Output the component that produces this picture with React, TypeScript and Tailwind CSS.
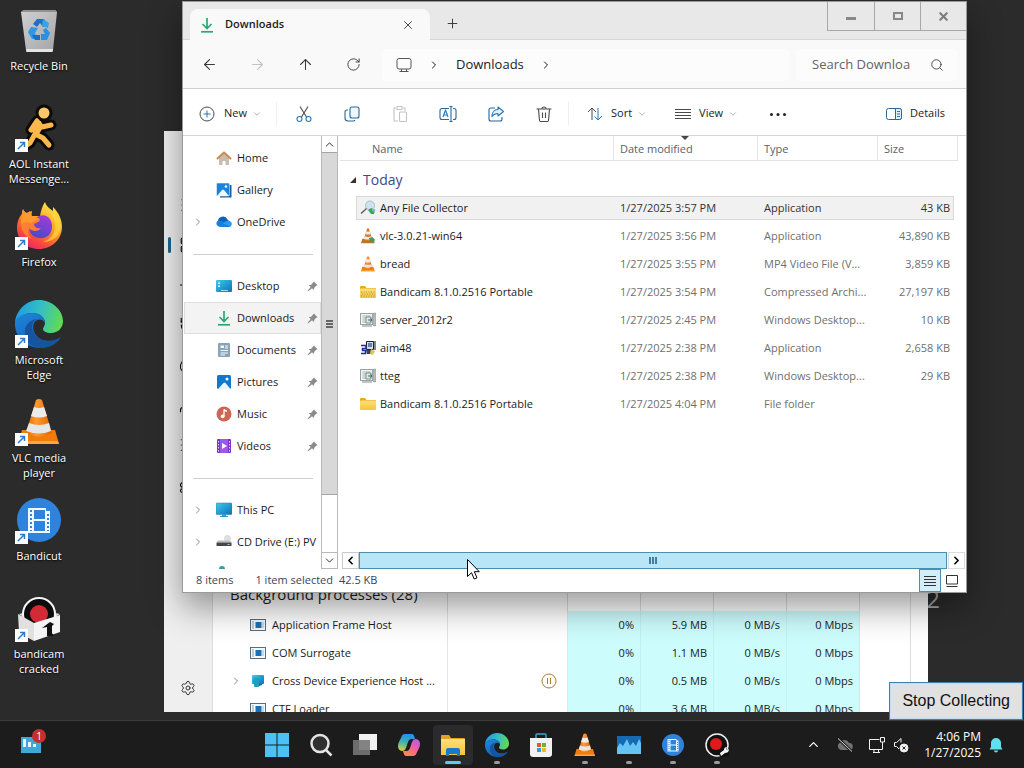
import type { ReactNode } from "react";
import {
	Activity,
	ArrowLeft,
	ArrowRight,
	ArrowUp,
	ChevronDown,
	ChevronLeft,
	ChevronRight,
	ChevronUp,
	Gauge,
	History,
	LayoutGrid,
	List,
	Menu,
	Plus,
	Puzzle,
	RotateCw,
	Search,
	Settings,
	Users,
	X,
} from "lucide-react";
import { clsx } from "clsx";

type IconProps = { className?: string };

type FileRow = {
	name: string;
	date: string;
	type: string;
	size: string;
	icon: ReactNode;
	selected?: boolean;
};

type Process = {
	name: string;
	memory: string;
	icon: ReactNode;
	expandable?: boolean;
	suspended?: boolean;
};

/* gradients shared by the icons */
function Gradients() {
	return (
		<svg aria-hidden="true" className="absolute h-0 w-0">
			<defs>
				<linearGradient id="edgeTop" x1="0" y1="0.4" x2="1" y2="0.6">
					<stop offset="0" stopColor="#1f9de0" />
					<stop offset="0.5" stopColor="#35bfc4" />
					<stop offset="1" stopColor="#63dc4c" />
				</linearGradient>
				<linearGradient id="edgeLeft" x1="0" y1="0" x2="0.6" y2="1">
					<stop offset="0" stopColor="#1e86dd" />
					<stop offset="1" stopColor="#1160b4" />
				</linearGradient>
				<linearGradient id="foxBody" x1="0.8" y1="0" x2="0.2" y2="1">
					<stop offset="0" stopColor="#fff04a" />
					<stop offset="0.45" stopColor="#ff9a25" />
					<stop offset="0.75" stopColor="#fb4a3c" />
					<stop offset="1" stopColor="#e51f74" />
				</linearGradient>
				<linearGradient id="foxGlobe" x1="0.7" y1="0" x2="0.3" y2="1">
					<stop offset="0" stopColor="#a23bd8" />
					<stop offset="1" stopColor="#4b48c8" />
				</linearGradient>
				<linearGradient id="cone" x1="0" y1="0" x2="1" y2="0">
					<stop offset="0" stopColor="#e66a00" />
					<stop offset="0.4" stopColor="#ff9a2e" />
					<stop offset="1" stopColor="#e26200" />
				</linearGradient>
				<linearGradient id="screen" x1="0" y1="0" x2="1" y2="1">
					<stop offset="0" stopColor="#3ccbe8" />
					<stop offset="1" stopColor="#0b6fc0" />
				</linearGradient>
				<linearGradient id="bin" x1="0" y1="0" x2="1" y2="1">
					<stop offset="0" stopColor="#d0d1d2" />
					<stop offset="1" stopColor="#a3a5a7" />
				</linearGradient>
				<linearGradient id="folder" x1="0" y1="0" x2="0" y2="1">
					<stop offset="0" stopColor="#ffe07a" />
					<stop offset="1" stopColor="#f8c33c" />
				</linearGradient>
				<linearGradient id="copilotA" x1="0.6" y1="0" x2="0.3" y2="1">
					<stop offset="0" stopColor="#2a8cf0" />
					<stop offset="0.5" stopColor="#3cb0b4" />
					<stop offset="1" stopColor="#d5cf3b" />
				</linearGradient>
				<linearGradient id="copilotB" x1="0.8" y1="0" x2="0.3" y2="1">
					<stop offset="0" stopColor="#b05ce8" />
					<stop offset="0.5" stopColor="#f0609c" />
					<stop offset="1" stopColor="#ff8a4a" />
				</linearGradient>
			</defs>
		</svg>
	);
}

function RecycleBinIcon({ className }: IconProps) {
	return (
		<svg className={className} viewBox="0 0 48 48" aria-hidden="true">
			<path d="M6 6l3-2h31l2 2-4 38H11z" fill="url(#bin)" />
			<path d="M6 6l3-2h31l2 2z" fill="#8f9193" />
			<path d="M11 43h27l-.4 3H11.300z" fill="#e4e4e4" />
			<path d="M18 18l4-5h7l4 6-5 2-3-4-3 4z" fill="#1f6fc4" />
			<path d="M28 13l6 4-1 5-6-2z" fill="#38a2ee" />
			<path d="M16 21l7 1-3 5 2 6h-5l-4-7z" fill="#2f97e4" />
			<path d="M17 29l3 5h5v-5h-6z" fill="#1d6dc0" />
			<path d="M31 22l4 5-3 7h-6v-6h4l-2-4z" fill="#2b8fe2" />
		</svg>
	);
}

function AimIcon({ className }: IconProps) {
	const body = "M22 17l-6 9M22 17l5 6 9-2M22 18l-2 12 8 4 6 7M20 30l-5 9-6 4";
	return (
		<svg className={className} viewBox="0 0 48 48" aria-hidden="true">
			<g stroke="#0b0b0b" strokeLinecap="round" strokeLinejoin="round" fill="none">
				<path d={body} strokeWidth="11" />
				<circle cx="29" cy="9" r="5" strokeWidth="7" fill="#0b0b0b" />
			</g>
			<path d={body} stroke="#fdb84c" strokeWidth="5" strokeLinecap="round" strokeLinejoin="round" fill="none" />
			<path d="M20 17h6l1 8-4 7-4-3z" fill="#fdb84c" />
			<circle cx="29" cy="9" r="5.500" fill="#fec869" />
		</svg>
	);
}

function FirefoxIcon({ className }: IconProps) {
	return (
		<svg className={className} viewBox="0 0 48 48" aria-hidden="true">
			<path
				d="M30 0c1 4 4 6 8 9 0-2 0-3 0-4 6 6 9 13 9 20 0 12-10 22-23 22S2 38 2 26c0-6 2-11 5-14 0-2 0-4 1-5 1 2 2 3 4 4l5-2c0 2-1 4 0 5h8c1-5 2-10 5-14z"
				fill="url(#foxBody)"
			/>
			<path d="M24 14c8-3 14 4 13 12s-7 11-13 10c-7-1-11-6-9-13 1-5 5-7 9-9z" fill="url(#foxGlobe)" />
			<path d="M8 14c5-1 8 1 10 2l7 1c0 3-4 4-6 5 0 3 3 5 7 4-3 4-9 4-12 0-2 3 0 9 4 11-7-1-12-8-12-15 0-3 0-6 2-8z" fill="#ff7f33" />
			<path d="M7 10l2 3 6-4 1 5 8 2c-2 3-6 3-8 5-3-2-7-1-10 1z" fill="#ff9b2c" />
			<path d="M31 2c0 6 9 10 9 22 0 9-6 14-12 16 10 0 18-7 18-16 0-6-3-12-7-16v5c-3-3-7-6-8-11z" fill="#ffd83d" opacity="0.7" />
		</svg>
	);
}

function EdgeIcon({ className }: IconProps) {
	return (
		<svg className={className} viewBox="0 0 48 48" aria-hidden="true">
			<path
				d="M0 22C2 8 13 0 24 0c13 0 24 10 24 21 0 7-5 12-12 12-5 0-8-2-8-4s2-3 2-6c0-6-6-10-13-10-8 0-14 4-17 9z"
				fill="url(#edgeTop)"
			/>
			<path
				d="M0 22c3-6 9-9 17-9 7 0 13 4 13 10-3-5-9-4-11 0-3 7 2 15 9 17 6 2 12 1 18-3-4 7-12 11-21 11C11 48-1 37 0 22z"
				fill="url(#edgeLeft)"
			/>
			<path d="M23 19c-6 1-8 9-3 16 5 6 15 8 25 3-4 6-11 10-20 10-10-1-16-9-15-17 0-7 6-12 13-12z" fill="#1654a0" />
		</svg>
	);
}

function VlcIcon({ className }: IconProps) {
	return (
		<svg className={className} viewBox="0 0 48 48" aria-hidden="true">
			<path d="M7 32h33l4 14H3z" fill="#f07c0c" />
			<path d="M4 43h39l1 3H3z" fill="#ffa63c" />
			<path d="M21 2q3-2 6 0l10 33q-13 7-26 0z" fill="url(#cone)" />
			<path d="M19 9q5 2 10 0l3 9q-8 3-16 0z" fill="#ececec" />
			<path d="M14 25q10 4 20 0l2 8q-12 5-25 0z" fill="#e6e6e6" />
		</svg>
	);
}

function BandicutIcon({ className }: IconProps) {
	return (
		<svg className={className} viewBox="0 0 48 48" aria-hidden="true">
			<circle cx="24" cy="24" r="22" fill="#2f83dc" />
			<path d="M13 12h18v3h4v22H13z" fill="#f2f8ff" />
			<path d="M19 14h11v9H19zM19 25h11v10H19z" fill="#2f83dc" />
			<g fill="#2f83dc">
				<path d="M15 14h2v2h-2zM15 18h2v2h-2zM15 22h2v2h-2zM15 26h2v2h-2zM15 30h2v2h-2zM15 34h2v1h-2z" />
				<path d="M32 18h2v2h-2zM32 22h2v2h-2zM32 26h2v2h-2zM32 30h2v2h-2zM32 34h2v1h-2z" />
			</g>
		</svg>
	);
}

function BandicamBoxIcon({ className }: IconProps) {
	return (
		<svg className={className} viewBox="0 0 48 48" aria-hidden="true">
			<path d="M4 20l8-2h24l9 2-9 6H13z" fill="#d8d8d8" />
			<circle cx="24" cy="20" r="16" fill="#0c0c0c" stroke="#f5f5f5" strokeWidth="2" />
			<circle cx="24" cy="20" r="9" fill="#d32b35" />
			<path d="M3 20l16 9v18L4 39z" fill="#e0e0e0" />
			<path d="M19 29l26-8v17l-26 9z" fill="#f4f4f4" />
			<path d="M27 34l8-6 4 2-2 2v7l2 3h-7v-9z" fill="#111" />
		</svg>
	);
}

function BandicamIcon({ className }: IconProps) {
	return (
		<svg className={className} viewBox="0 0 24 24" aria-hidden="true">
			<circle cx="12" cy="12" r="11" fill="#111" stroke="#f0f0f0" strokeWidth="1.500" />
			<circle cx="11" cy="11" r="6" fill="#e0191c" />
			<path d="M15 24l-1-3 4-3c-1-2 1-5 4-5l-1 3 1 1 2-1v7z" fill="#111" />
			<path d="M15 20l4-3c0-2 1-3 3-3l-1 2 1 1 2-1c0 3-2 4-4 4l-4 3z" fill="#f5f5f5" />
		</svg>
	);
}

function DownloadIcon({ className }: IconProps) {
	return (
		<svg className={className} viewBox="0 0 16 16" fill="none" stroke="#2aa772" strokeWidth="1.700" aria-hidden="true">
			<path d="M8 1v10M3.500 7L8 11.500 12.500 7" />
			<path d="M2 14.800h12" />
		</svg>
	);
}

function HomeIcon({ className }: IconProps) {
	return (
		<svg className={className} viewBox="0 0 16 16" aria-hidden="true">
			<path d="M3 7l5-4 5 4v8h-3.500v-4h-3v4H3z" fill="#c9bdb2" />
			<path d="M1.500 8.500L8 2.500l6.500 6" stroke="#cf8a4c" strokeWidth="2" fill="none" strokeLinecap="round" strokeLinejoin="round" />
		</svg>
	);
}

function PictureIcon({ className }: IconProps) {
	return (
		<svg className={className} viewBox="0 0 16 16" aria-hidden="true">
			<rect x="1" y="1" width="14" height="14" rx="1.500" fill="#1478c8" />
			<path d="M2 15l5.500-6q1-1 2 0L14.500 15z" fill="#e8f6ff" />
			<circle cx="11" cy="5" r="1.500" fill="#fff" />
		</svg>
	);
}

function GalleryIcon({ className }: IconProps) {
	return (
		<svg className={className} viewBox="0 0 16 16" aria-hidden="true">
			<path d="M4 3h11.500v12.500H4z" fill="#1c5c9c" />
			<rect x="0.500" y="1" width="13" height="13" rx="1" fill="#1c84d8" stroke="#fff" strokeWidth="0.500" />
			<path d="M1 14l5-6q1-1 2 0l5 6z" fill="#eef8ff" />
			<circle cx="10" cy="4.500" r="1.300" fill="#fff" />
		</svg>
	);
}

function OneDriveIcon({ className }: IconProps) {
	return (
		<svg className={className} viewBox="0 0 16 16" aria-hidden="true">
			<path d="M2 8a5 5 0 019.500-2.500L14 8l-6 3z" fill="#0f62ba" />
			<path d="M4 13a3.500 3.500 0 01-2.500-6Q4 6 6.500 7.500L12 10l3 1.500Q14.500 13 13 13z" fill="#1a80d8" />
			<path d="M7 9.500l3-2.500q4-1 5.500 1.500 1 3-1.500 4z" fill="#2b9af0" />
		</svg>
	);
}

function DesktopIcon({ className }: IconProps) {
	return (
		<svg className={className} viewBox="0 0 16 16" aria-hidden="true">
			<rect y="2" width="16" height="12" rx="1" fill="url(#screen)" />
			<path d="M2 4.500h2v1.500H2zM2 7.500h2V9H2z" fill="#d9f6ff" />
			<path d="M5 12h7v1H5z" fill="#9fe3fb" />
		</svg>
	);
}

function DocumentIcon({ className }: IconProps) {
	return (
		<svg className={className} viewBox="0 0 16 16" aria-hidden="true">
			<rect x="2" y="1" width="12" height="14" rx="1" fill="#8ba3b8" />
			<path d="M4.500 3.500H8V6H4.500zM9 3.500h3v1H9zM9 5.500h3v1H9zM4.500 8h7.500v1H4.500zM4.500 10.500h7.500v1H4.500zM4.500 12.500H9v1H4.500z" fill="#f4f9fd" />
		</svg>
	);
}

function MusicIcon({ className }: IconProps) {
	return (
		<svg className={className} viewBox="0 0 16 16" aria-hidden="true">
			<circle cx="8" cy="8" r="7.500" fill="#cc6656" />
			<path d="M8 3.500v6.500" stroke="#fff" strokeWidth="1.300" />
			<path d="M8 3l3 1.500v1.500L8 5z" fill="#fff" />
			<circle cx="6.700" cy="10.300" r="1.900" fill="#fff" />
		</svg>
	);
}

function VideoIcon({ className }: IconProps) {
	return (
		<svg className={className} viewBox="0 0 16 16" aria-hidden="true">
			<rect x="1" y="1" width="14" height="14" rx="1" fill="#7a35c8" />
			<path d="M4 1h8v14H4z" fill="#9a5ae6" />
			<path d="M2 3h1v1.500H2zM2 6h1v1.500H2zM2 9h1v1.500H2zM2 12h1v1.500H2zM13 3h1v1.500h-1zM13 6h1v1.500h-1zM13 9h1v1.500h-1zM13 12h1v1.500h-1z" fill="#e4d4fa" />
			<path d="M6 5l5 3-5 3z" fill="#fff" />
		</svg>
	);
}

function ComputerIcon({ className }: IconProps) {
	return (
		<svg className={className} viewBox="0 0 16 16" aria-hidden="true">
			<rect y="1" width="16" height="11.500" rx="1" fill="url(#screen)" stroke="#2d7d96" strokeWidth="0.500" />
			<path d="M6 12.500h4V14h2v1H4v-1h2z" fill="#2c9cc8" />
		</svg>
	);
}

function DriveIcon({ className }: IconProps) {
	return (
		<svg className={className} viewBox="0 0 16 16" aria-hidden="true">
			<circle cx="11.500" cy="4.500" r="3.500" fill="#dcdedf" />
			<path d="M2 6.500h12l1.500 2H.500z" fill="#bcbec0" />
			<path d="M.500 8.500h15v3.500H.500z" fill="#45474a" />
			<path d="M11.500 10h2v1h-2z" fill="#b9c9bd" />
		</svg>
	);
}

function PinIcon({ className }: IconProps) {
	return (
		<svg className={className} viewBox="0 0 12 12" fill="#8a8a8a" aria-hidden="true">
			<path d="M7.500.500l4 4-1.500.800-2 2-.500 2.500-2-2L1 11.500l-.500-.500 3.500-4.500-2-2 2.500-.500 2-2z" />
		</svg>
	);
}

function CollectorIcon({ className }: IconProps) {
	return (
		<svg className={className} viewBox="0 0 16 16" aria-hidden="true">
			<circle cx="10" cy="5.500" r="4.500" fill="#cfe4ea" stroke="#a3bfca" />
			<path d="M1 13.500l5.500-5" stroke="#555" strokeWidth="1.200" />
			<path d="M8 10l3-2 4 2-1 4h-3z" fill="#3ea55a" />
			<path d="M12 8.500l3.500 1-1 2-2.500-.500z" fill="#7fb3e8" />
		</svg>
	);
}

function FolderIcon({ zipped }: { zipped?: boolean }) {
	return (
		<svg className="h-4 w-4 shrink-0" viewBox="0 0 16 16" aria-hidden="true">
			<path d="M0 3q0-1 1-1h4l1.500 2H15q1 0 1 1v3H0z" fill="#e5a91d" />
			<rect y="4.500" width="16" height="9.500" rx="1" fill="url(#folder)" />
			{zipped && <path d="M1 8h14M2 10h13M1 12h14" stroke="#a38d3c" strokeDasharray="1 1.500" />}
		</svg>
	);
}

function RdpIcon() {
	return (
		<svg className="h-4 w-4 shrink-0" viewBox="0 0 16 16" aria-hidden="true">
			<rect x="0.500" y="1.500" width="12" height="11" fill="#f1f3f3" stroke="#9aa1a3" />
			<path d="M2.500 4h8M2.500 6h5M2.500 8h5M2.500 10h5" stroke="#a7b0b2" />
			<path d="M6 5h5v6H6z" fill="#dfe9e6" stroke="#78908c" />
			<path d="M13.500 1h2v13h-2z" fill="#b5babb" stroke="#7d8385" strokeWidth="0.500" />
			<path d="M2 14h10" stroke="#7f8b8d" />
			<path d="M8 8h4M10.500 6.500L12 8l-1.500 1.500" stroke="#3b6d60" fill="none" />
		</svg>
	);
}

function InstallerIcon() {
	return (
		<svg className="h-4 w-4 shrink-0" viewBox="0 0 16 16" aria-hidden="true">
			<path d="M6.500 1.500h7v8h-7z" fill="#d9dde3" stroke="#1b1b2c" />
			<path d="M8 3h4v4H8z" fill="#5f7fb8" />
			<path d="M1 5.500h5v3H2.500v2h3v3H1" stroke="#1d2b9c" strokeWidth="1.500" fill="none" />
			<path d="M6 10h5l1 4H7z" fill="#3a4150" />
			<path d="M11 9l4 2-2 4-3-1z" fill="#d9c95a" />
			<path d="M15 1v9" stroke="#111" />
		</svg>
	);
}

function VlcSetupIcon() {
	return (
		<svg className="h-4 w-4 shrink-0" viewBox="0 0 48 48" aria-hidden="true">
			<path d="M7 32h33l4 14H3z" fill="#b9752c" />
			<path d="M21 2q3-2 6 0l10 33q-13 7-26 0z" fill="#dd7a1e" />
			<path d="M19 10q5 2 10 0l3 8q-8 3-16 0zM14 25q10 4 20 0l2 7q-12 5-25 0z" fill="#ececec" />
			<path d="M27 30l10-3 8 8-4 9-11-3z" fill="#4c9a58" />
		</svg>
	);
}

function FrameHostIcon() {
	return (
		<svg className="h-4 w-4 shrink-0" viewBox="0 0 16 16" aria-hidden="true">
			<rect x="0.500" y="2.500" width="15" height="11" fill="#f3f8fb" stroke="#5d6c78" />
			<path d="M2 5h2M2 7h2M2 9h2M2 11h2" stroke="#7aa9c8" />
			<rect x="5.500" y="5" width="6" height="6" fill="#1b70b4" />
			<path d="M13 5v6" stroke="#9fb9cb" />
		</svg>
	);
}

function CrossDeviceIcon() {
	return (
		<svg className="h-4 w-4 shrink-0" viewBox="0 0 16 16" aria-hidden="true">
			<rect x="2" y="2" width="12" height="9" rx="1" fill="url(#screen)" />
			<rect x="4" y="5" width="5" height="9" rx="1" fill="#1fa0b8" />
			<path d="M9 11h3v1l-3 1z" fill="#0f6aa8" />
		</svg>
	);
}

const desktopShortcuts = [
	{ name: "Recycle Bin", Icon: RecycleBinIcon, link: false },
	{ name: "AOL Instant Messenge...", Icon: AimIcon, link: true },
	{ name: "Firefox", Icon: FirefoxIcon, link: true },
	{ name: "Microsoft Edge", Icon: EdgeIcon, link: true },
	{ name: "VLC media player", Icon: VlcIcon, link: true },
	{ name: "Bandicut", Icon: BandicutIcon, link: true },
	{ name: "bandicam cracked", Icon: BandicamBoxIcon, link: true },
];

const files: FileRow[] = [
	{ name: "Any File Collector", date: "1/27/2025 3:57 PM", type: "Application", size: "43 KB", icon: <CollectorIcon className="h-4 w-4 shrink-0" />, selected: true },
	{ name: "vlc-3.0.21-win64", date: "1/27/2025 3:56 PM", type: "Application", size: "43,890 KB", icon: <VlcSetupIcon /> },
	{ name: "bread", date: "1/27/2025 3:55 PM", type: "MP4 Video File (V...", size: "3,859 KB", icon: <VlcIcon className="h-4 w-4 shrink-0" /> },
	{ name: "Bandicam 8.1.0.2516 Portable", date: "1/27/2025 3:54 PM", type: "Compressed Archi...", size: "27,197 KB", icon: <FolderIcon zipped /> },
	{ name: "server_2012r2", date: "1/27/2025 2:45 PM", type: "Windows Desktop...", size: "10 KB", icon: <RdpIcon /> },
	{ name: "aim48", date: "1/27/2025 2:38 PM", type: "Application", size: "2,658 KB", icon: <InstallerIcon /> },
	{ name: "tteg", date: "1/27/2025 2:38 PM", type: "Windows Desktop...", size: "29 KB", icon: <RdpIcon /> },
	{ name: "Bandicam 8.1.0.2516 Portable", date: "1/27/2025 4:04 PM", type: "File folder", size: "", icon: <FolderIcon /> },
];

const processes: Process[] = [
	{ name: "Application Frame Host", memory: "5.9 MB", icon: <FrameHostIcon /> },
	{ name: "COM Surrogate", memory: "1.1 MB", icon: <FrameHostIcon /> },
	{ name: "Cross Device Experience Host ...", memory: "0.5 MB", icon: <CrossDeviceIcon />, expandable: true, suspended: true },
	{ name: "CTF Loader", memory: "3.6 MB", icon: <FrameHostIcon /> },
];

function DesktopShortcut({ name, Icon, link }: (typeof desktopShortcuts)[number]) {
	return (
		<button type="button" className="flex h-[98px] w-full flex-col items-center pt-[6px] text-center text-[11px] leading-[15px] text-white">
			<span className="relative h-12 w-12">
				<Icon className="h-full w-full" />
				{link && (
					<span className="absolute bottom-0 left-0 flex h-[13px] w-[13px] items-center justify-center bg-white">
						<svg className="h-[9px] w-[9px]" viewBox="0 0 9 9" fill="none" stroke="#2c7ccb" strokeWidth="1.500" aria-hidden="true">
							<path d="M1 8l6-6M3 1.500h4.500V6" />
						</svg>
					</span>
				)}
			</span>
			<span className="mt-1 px-1 [text-shadow:0_1px_2px_#000]">{name}</span>
		</button>
	);
}

const navIcons = [Menu, LayoutGrid, Activity, History, Gauge, Users, List, Puzzle];

function TaskManager() {
	return (
		<section aria-label="Task Manager" className="absolute top-[131px] right-[96px] bottom-[56px] left-[164px] flex overflow-hidden bg-white">
			<nav className="flex w-12 shrink-0 flex-col bg-[#efefef] pt-[54px] pb-1">
				{navIcons.map((NavIcon, i) => (
					<button key={i} type="button" aria-label={`Page ${i + 1}`} className="relative flex h-10 shrink-0 items-center justify-center">
						{i === 1 && <span className="absolute left-1 h-4 w-[3px] rounded-full bg-[#17678a]" />}
						<NavIcon size={18} strokeWidth={1.5} />
					</button>
				))}
				<button type="button" aria-label="Settings" className="mt-auto flex h-10 shrink-0 items-center justify-center text-[#333]">
					<Settings size={16} strokeWidth={1.5} />
				</button>
			</nav>
			<div className="min-w-0 flex-1 border-l border-[#dedede] pt-[452px]">
				<table className="w-full table-fixed border-separate border-spacing-0 text-[11px] text-[#1a1a1a]">
					<colgroup>
						<col />
						<col className="w-[120px]" />
						<col className="w-[73px]" />
						<col className="w-[73px]" />
						<col className="w-[73px]" />
						<col className="w-[73px]" />
						<col className="w-[51px]" />
						<col className="w-[17px]" />
					</colgroup>
					<tbody>
						<tr className="h-7">
							<th className="border-r border-[#dedede] pb-[6px] pl-[17px] text-left text-[15px] leading-5 font-normal whitespace-nowrap">
								Background processes (28)
							</th>
							<td className="border-r border-[#dedede]" />
							<td className="border-r border-[#dedede]" />
							<td className="border-r border-[#dedede]" />
							<td className="border-r border-[#dedede]" />
							<td className="border-r border-[#dedede]" />
							<td className="border-r border-[#dedede]" />
							<td />
						</tr>
						{processes.map((process) => (
							<tr key={process.name} className="h-7">
								<td className="border-r border-[#e4e4e4]">
									<div className="flex items-center pl-[17px] whitespace-nowrap">
										<span className="flex w-5 shrink-0">
											{process.expandable && <ChevronRight size={12} strokeWidth={2} color="#888" />}
										</span>
										{process.icon}
										<span className="pl-[6px]">{process.name}</span>
									</div>
								</td>
								<td className="border-r border-[#e4e4e4]">
									{process.suspended && (
										<svg className="mr-[10px] ml-auto h-4 w-4" viewBox="0 0 16 16" fill="none" stroke="#a87a35" aria-label="Suspended">
											<circle cx="8" cy="8" r="7" />
											<path d="M6.500 5v6M9.500 5v6" />
										</svg>
									)}
								</td>
								{["0%", process.memory, "0 MB/s", "0 Mbps"].map((value, i) => (
									<td key={i} className="border-r border-[#c0f2f2] bg-[#cdfcfd] pr-[6px] text-right whitespace-nowrap">
										{value}
									</td>
								))}
								<td className="border-r border-[#dedede]" />
								<td />
							</tr>
						))}
					</tbody>
				</table>
			</div>
		</section>
	);
}

function SideItem({
	name,
	icon,
	expandable,
	pinned,
	active,
}: {
	name: string;
	icon: ReactNode;
	expandable?: boolean;
	pinned?: boolean;
	active?: boolean;
}) {
	return (
		<a
			href="#"
			className={clsx(
				"ml-[1px] flex h-8 shrink-0 items-center border pr-[2px] pl-[7px] text-[11px] whitespace-nowrap text-[#1b1b1b]",
				active ? "border-[#dedede] bg-[#f3f3f3]" : "border-transparent",
			)}
		>
			<span className="flex w-6 shrink-0">
				{expandable && <ChevronRight size={12} strokeWidth={2} color="#888" />}
			</span>
			{icon}
			<span className="min-w-0 flex-1 pl-[5px]">{name}</span>
			{pinned && <PinIcon className="h-[11px] w-[11px] shrink-0" />}
		</a>
	);
}

function SideDivider() {
	return (
		<div className="flex h-8 shrink-0 items-center pr-2 pl-[10px]">
			<hr className="w-full border-[#cfcfcf]" />
		</div>
	);
}

function Sidebar() {
	const icon = "h-4 w-4 shrink-0";
	return (
		<nav className="flex w-[138px] shrink-0 flex-col overflow-hidden pt-[6px]">
			<SideItem name="Home" icon={<HomeIcon className={icon} />} />
			<SideItem name="Gallery" icon={<GalleryIcon className={icon} />} />
			<SideItem name="OneDrive" icon={<OneDriveIcon className={icon} />} expandable />
			<SideDivider />
			<SideItem name="Desktop" icon={<DesktopIcon className={icon} />} pinned />
			<SideItem name="Downloads" icon={<DownloadIcon className={icon} />} pinned active />
			<SideItem name="Documents" icon={<DocumentIcon className={icon} />} pinned />
			<SideItem name="Pictures" icon={<PictureIcon className={icon} />} pinned />
			<SideItem name="Music" icon={<MusicIcon className={icon} />} pinned />
			<SideItem name="Videos" icon={<VideoIcon className={icon} />} pinned />
			<SideDivider />
			<SideItem name="This PC" icon={<ComputerIcon className={icon} />} expandable />
			<SideItem name="CD Drive (E:) PV" icon={<DriveIcon className={icon} />} expandable />
			<span className="mt-2 ml-9 h-[3px] w-[6px] shrink-0 rounded-t bg-[#3f98a8]" />
		</nav>
	);
}

function VerticalScrollbar() {
	return (
		<div className="flex w-[17px] shrink-0 flex-col border-x border-[#b9b9b9]">
			<button type="button" aria-label="Scroll up" className="flex h-[17px] items-center justify-center border-b border-[#a5a5a5]">
				<ChevronUp size={13} strokeWidth={1.5} />
			</button>
			<div className="flex h-[342px] flex-col items-center justify-center gap-[1px] border-b border-[#a5a5a5] bg-[#d8d8d8]">
				<span className="h-[2px] w-[7px] bg-[#666]" />
				<span className="h-[2px] w-[7px] bg-[#666]" />
				<span className="h-[2px] w-[7px] bg-[#666]" />
			</div>
			<div className="flex-1" />
			<button type="button" aria-label="Scroll down" className="flex h-[17px] items-center justify-center border-y border-[#b9b9b9]">
				<ChevronDown size={13} strokeWidth={1.5} />
			</button>
		</div>
	);
}

function HorizontalScrollbar() {
	return (
		<div className="mr-[1px] ml-1 flex h-[17px] shrink-0">
			<button type="button" aria-label="Scroll left" className="flex w-[17px] items-center justify-center border border-[#c9c9c9] text-black">
				<ChevronLeft size={13} strokeWidth={3} />
			</button>
			<div className="mr-[1px] flex flex-1 items-center justify-center gap-[1px] border border-[#4a8fb0] bg-[#b8e6f7]">
				<span className="h-[7px] w-[2px] bg-[#3f7fa6]" />
				<span className="h-[7px] w-[2px] bg-[#3f7fa6]" />
				<span className="h-[7px] w-[2px] bg-[#3f7fa6]" />
			</div>
			<button type="button" aria-label="Scroll right" className="flex w-[17px] items-center justify-center border border-[#dcdcdc] text-black">
				<ChevronRight size={13} strokeWidth={3} />
			</button>
		</div>
	);
}

function FileTable() {
	return (
		<table className="w-full table-fixed border-separate border-spacing-0 text-[11px]">
			<colgroup>
				<col />
				<col className="w-[144px]" />
				<col className="w-[120px]" />
				<col className="w-[80px]" />
			</colgroup>
			<thead>
				<tr className="h-[25px] text-left text-[#57616f]">
					<th className="border-r border-b border-[#e3e3e3] pt-[2px] pl-8 font-normal">Name</th>
					<th className="relative border-r border-b border-[#e3e3e3] pt-[2px] pl-[6px] font-normal">
						<span className="absolute top-0 left-[67px] h-0 w-0 border-x-4 border-t-4 border-x-transparent border-t-[#444]" />
						Date modified
					</th>
					<th className="border-r border-b border-[#e3e3e3] pt-[2px] pl-[6px] font-normal">Type</th>
					<th className="border-r border-b border-[#e3e3e3] pt-[2px] pl-[6px] font-normal">Size</th>
				</tr>
			</thead>
			<tbody>
				<tr className="h-[33px]">
					<td colSpan={4} className="pt-1 pl-[9px]">
						<div className="flex items-center gap-[6px] text-[14px] leading-5 text-[#3a4a8c]">
							<svg className="h-2 w-2" viewBox="0 0 8 8" fill="#333" aria-hidden="true">
								<path d="M7 1v6H1z" />
							</svg>
							Today
						</div>
					</td>
				</tr>
				{files.map((file, i) => {
					const bar = clsx(
						"flex h-6 items-center border-y whitespace-nowrap",
						file.selected ? "border-[#d9d9d9] bg-[#f1f1f1] text-[#333]" : "border-transparent text-[#6f6f6f]",
					);
					return (
						<tr key={i} className="h-7">
							<td className="pl-[16px]">
								<div className={clsx(bar, "gap-1 border-l pl-[3px]")}>
									{file.icon}
									<span className="text-[#1b1b1b]">{file.name}</span>
								</div>
							</td>
							<td>
								<div className={clsx(bar, "pl-[6px]")}>{file.date}</div>
							</td>
							<td>
								<div className={clsx(bar, "pl-[6px]")}>{file.type}</div>
							</td>
							<td className="pr-1">
								<div className={clsx(bar, "justify-end border-r pr-[3px]")}>{file.size}</div>
							</td>
						</tr>
					);
				})}
			</tbody>
		</table>
	);
}

function ToolButton({ label, children }: { label: string; children: ReactNode }) {
	return (
		<button type="button" aria-label={label} className="flex w-12 shrink-0 items-center justify-center">
			<svg className="h-[18px] w-[18px]" viewBox="0 0 18 18" fill="none" stroke="#4a4a4a" strokeWidth="1.100" strokeLinejoin="round" aria-hidden="true">
				{children}
			</svg>
		</button>
	);
}

function CommandBar() {
	return (
		<div className="flex h-[47px] shrink-0 items-stretch border-b border-[#d4d4d4] bg-white pt-[3px] pr-[21px] pl-4 text-[11px] text-[#1b1b1b]">
			<button type="button" className="flex w-[77px] shrink-0 items-center">
				<svg className="h-4 w-4" viewBox="0 0 16 16" fill="none" stroke="#4a4a4a" aria-hidden="true">
					<circle cx="8" cy="8" r="7" />
					<path d="M8 4.500v7M4.500 8h7" stroke="#2478b8" />
				</svg>
				<span className="pr-[5px] pl-[9px]">New</span>
				<ChevronDown size={10} strokeWidth={1.5} color="#888" />
			</button>
			<span className="mr-[3px] h-6 w-[1px] self-center bg-[#f0f0f0]" />
			<ToolButton label="Cut">
				<path d="M5 1.500l6.500 10.500M13 1.500L6.500 12" />
				<g stroke="#2478b8">
					<circle cx="4.500" cy="14" r="2.500" />
					<circle cx="13.500" cy="14" r="2.500" />
				</g>
			</ToolButton>
			<ToolButton label="Copy">
				<g stroke="#2b6694">
					<rect x="7" y="2" width="9" height="11" rx="2" fill="#eef7fd" />
					<path d="M5 5H4a2 2 0 00-2 2v6a3 3 0 003 3h5a2 2 0 002-1" />
				</g>
			</ToolButton>
			<ToolButton label="Paste">
				<g stroke="#c4c4c4">
					<path d="M5 3H3v13h4M12 3h2v3" />
					<path d="M6 1.500h5v3H6z" />
					<rect x="8.500" y="7" width="7" height="9.500" rx="1" />
				</g>
			</ToolButton>
			<ToolButton label="Rename">
				<g stroke="#2b6694">
					<path d="M10 3.500H3a2 2 0 00-2 2v7a2 2 0 002 2h7M14 3.500h1a2 2 0 012 2v7a2 2 0 01-2 2h-1" />
					<path d="M12 1.500v15M10.500 1.500h3M10.500 16.500h3" />
					<path d="M4 12l2.500-7L9 12M5 10h3" stroke="#2478b8" />
				</g>
			</ToolButton>
			<ToolButton label="Share">
				<path d="M8 3H4a2 2 0 00-2 2v9a2 2 0 002 2h9a2 2 0 002-2v-2" stroke="#2b6694" />
				<path d="M11 2l5.500 4.500L11 11V8.500c-3 0-4.500 1-6 3 0-4 2-7 6-7z" stroke="#2478b8" fill="#e6f3fb" />
			</ToolButton>
			<ToolButton label="Delete">
				<path d="M1.500 4h15M3.500 4l1 11.500q.200 1 1 1h7q.800 0 1-1l1-11.500M7 4a2 2 0 014 0M7.500 7.500v5.500M10.500 7.500v5.500" />
			</ToolButton>
			<span className="h-6 w-[1px] self-center bg-[#f0f0f0]" />
			<button type="button" className="ml-[18px] flex shrink-0 items-center">
				<svg className="h-4 w-4" viewBox="0 0 16 16" fill="none" stroke="#4a4a4a" aria-hidden="true">
					<path d="M5 14V2M1 6l4-4 4 4" />
					<path d="M11 2v12M7.500 10.500L11 14l4-4" stroke="#2478b8" />
				</svg>
				<span className="pr-[5px] pl-2">Sort</span>
				<ChevronDown size={10} strokeWidth={1.5} color="#888" />
			</button>
			<button type="button" className="ml-7 flex shrink-0 items-center">
				<svg className="h-4 w-4" viewBox="0 0 16 16" fill="none" stroke="#4a4a4a" aria-hidden="true">
					<path d="M0 3.500h16M0 6.500h16M0 9.500h16M0 12.500h16" />
				</svg>
				<span className="pr-[5px] pl-2">View</span>
				<ChevronDown size={10} strokeWidth={1.5} color="#888" />
			</button>
			<button type="button" aria-label="More" className="ml-8 flex shrink-0 items-center">
				<svg className="h-4 w-4" viewBox="0 0 16 16" fill="#222" aria-hidden="true">
					<circle cx="1.500" cy="8.500" r="1.500" />
					<circle cx="8" cy="8.500" r="1.500" />
					<circle cx="14.500" cy="8.500" r="1.500" />
				</svg>
			</button>
			<button type="button" className="ml-auto flex shrink-0 items-center gap-2">
				<svg className="h-4 w-4" viewBox="0 0 16 16" fill="none" stroke="#2b6694" aria-hidden="true">
					<rect x="0.500" y="2.500" width="15" height="11" rx="2" />
					<path d="M9.500 2.500h4q2 0 2 2v7q0 2-2 2h-4z" fill="#dff0fb" />
					<path d="M11 5.500h3M11 8h3M11 10.500h3" stroke="#2478b8" />
				</svg>
				Details
			</button>
		</div>
	);
}

function Explorer() {
	return (
		<section aria-label="Downloads" className="absolute top-[1px] right-[57px] left-[182px] flex h-[592px] flex-col border border-[#9a9a9a] bg-white shadow-[0_14px_32px_rgba(0,0,0,0.4)]">
			<div className="flex h-[38px] shrink-0 items-end border-b border-[#d6d6d6] bg-[#e8e8e8] pl-[7px]">
				<div className="-mb-[1px] flex h-[31px] w-[240px] items-center rounded-t-lg bg-[#f9f9f9] pr-[15px] pl-[9px]">
					<DownloadIcon className="h-4 w-4" />
					<h1 className="flex-1 pl-[10px] text-[11px] font-semibold text-[#1b1b1b]">Downloads</h1>
					<button type="button" aria-label="Close tab">
						<X size={14} strokeWidth={1.5} color="#333" />
					</button>
				</div>
				<button type="button" aria-label="New tab" className="ml-[15px] flex h-[31px] items-center">
					<Plus size={15} strokeWidth={1.5} color="#333" />
				</button>
				<div className="ml-auto flex h-[29px] self-start border-b border-l border-[#a8a8a8] text-[#7d7d7d]">
					<button type="button" aria-label="Minimize" className="flex w-[47px] items-center justify-center border-r border-[#a8a8a8]">
						<span className="mt-1 h-[3px] w-[10px] bg-[#888]" />
					</button>
					<button type="button" aria-label="Maximize" className="flex w-[46px] items-center justify-center border-r border-[#a8a8a8]">
						<span className="h-2 w-[10px] border-2 border-[#888]" />
					</button>
					<button type="button" aria-label="Close" className="flex w-[45px] items-center justify-center">
						<X size={13} strokeWidth={4} />
					</button>
				</div>
			</div>
			<div className="flex h-[49px] shrink-0 items-center border-b border-[#d0d0d0] bg-[#f9f9f9] pt-[1px] pr-[9px] pl-[2px] text-[#3a3a3a]">
				<button type="button" aria-label="Back" className="flex w-12 shrink-0 justify-center">
					<ArrowLeft size={17} strokeWidth={1.5} />
				</button>
				<button type="button" aria-label="Forward" className="flex w-12 shrink-0 justify-center text-[#c2c2c2]">
					<ArrowRight size={17} strokeWidth={1.5} />
				</button>
				<button type="button" aria-label="Up" className="flex w-12 shrink-0 justify-center">
					<ArrowUp size={17} strokeWidth={1.5} />
				</button>
				<button type="button" aria-label="Refresh" className="flex w-12 shrink-0 justify-center">
					<RotateCw size={15} strokeWidth={1.5} />
				</button>
				<div className="ml-[5px] flex h-8 min-w-0 flex-1 items-center rounded bg-[#fcfcfc] pl-[14px] text-[13px] text-[#1b1b1b]">
					<svg className="h-4 w-4 shrink-0" viewBox="0 0 16 16" fill="none" stroke="#555" aria-label="This PC">
						<rect x="1" y="1.500" width="14" height="10.500" rx="2" />
						<path d="M5.500 12v2.500M10.500 12v2.500M3.500 14.500h9" />
					</svg>
					<ChevronRight className="mx-4 shrink-0" size={12} strokeWidth={2} />
					<a href="#">Downloads</a>
					<ChevronRight className="ml-4 shrink-0" size={12} strokeWidth={2} />
				</div>
				<label className="ml-[7px] flex h-8 w-[161px] shrink-0 items-center rounded bg-[#fcfcfc] pr-[13px] pl-4">
					<input type="search" aria-label="Search Downloads" placeholder="Search Downloa" className="min-w-0 flex-1 bg-transparent text-[13px] placeholder:text-[#636363] focus:outline-none" />
					<Search className="shrink-0" size={14} strokeWidth={1.5} />
				</label>
			</div>
			<CommandBar />
			<div className="flex min-h-0 flex-1">
				<Sidebar />
				<VerticalScrollbar />
				<main className="flex min-w-0 flex-1 flex-col">
					<div className="mr-2 ml-[2px] min-h-0 flex-1">
						<FileTable />
					</div>
					<HorizontalScrollbar />
				</main>
			</div>
			<footer className="flex h-[23px] shrink-0 items-center pr-[3px] pl-[13px] text-[11px] text-[#36455c]">
				<span>8 items</span>
				<span className="pl-[22px]">1 item selected</span>
				<span className="pl-[6px]">42.5 KB</span>
				<button type="button" aria-label="Details view" className="ml-auto flex h-[23px] w-[22px] items-center justify-center border border-[#4a8fb0] bg-[#d3edf9]">
					<svg className="h-3 w-3" viewBox="0 0 12 12" stroke="#333" aria-hidden="true">
						<path d="M0 1.500h12M0 4.500h12M0 7.500h12M0 10.500h12" />
					</svg>
				</button>
				<button type="button" aria-label="Large icons" className="flex h-[23px] w-[22px] items-center justify-center">
					<svg className="h-3 w-3" viewBox="0 0 12 12" fill="none" stroke="#333" aria-hidden="true">
						<path d="M.500.500h11v8.500H.500zM.500 11.500h11" />
					</svg>
				</button>
			</footer>
		</section>
	);
}

function TaskButton({
	label,
	state,
	children,
}: {
	label: string;
	state?: "running" | "active";
	children: ReactNode;
}) {
	return (
		<button
			type="button"
			aria-label={label}
			className={clsx("relative flex h-10 w-10 shrink-0 items-center justify-center rounded", state === "active" && "bg-[#2b2b2b]")}
		>
			{children}
			{state === "running" && <span className="absolute bottom-[1px] h-[3px] w-[6px] rounded-full bg-[#9a9a9a]" />}
			{state === "active" && <span className="absolute bottom-[1px] h-[3px] w-4 rounded-full bg-[#5fc9f0]" />}
		</button>
	);
}

function Taskbar() {
	return (
		<footer className="z-10 flex h-12 w-full shrink-0 items-center border-t border-[#3b3b3b] bg-[#1c1c1c] text-white">
			<div className="flex w-[257px] shrink-0 pl-5">
				<button type="button" aria-label="Widgets" className="relative h-6 w-6">
					<svg className="h-6 w-6" viewBox="0 0 24 24" aria-hidden="true">
						<path d="M1 4h20v16H1z" fill="#3fa8d8" />
						<path d="M3 6v8h3V6zM8 9v5h3V9zM13 11v3h3v-3z" fill="#e8f8ff" />
					</svg>
					<span className="absolute -top-1 left-3 h-[14px] w-[14px] rounded-full bg-[#c4302b] text-center text-[10px] leading-[14px]">1</span>
				</button>
			</div>
			<div className="flex shrink-0 gap-1">
				<TaskButton label="Start">
					<svg className="h-6 w-6" viewBox="0 0 24 24" fill="#4cc2f4" aria-hidden="true">
						<path d="M0 0h11.500v11.500H0zM12.500 0H24v11.500H12.500zM0 12.500h11.500V24H0zM12.500 12.500H24V24H12.500z" />
					</svg>
				</TaskButton>
				<TaskButton label="Search">
					<svg className="h-6 w-6" viewBox="0 0 24 24" fill="#303030" stroke="#e4e4e4" aria-hidden="true">
						<circle cx="11" cy="10.500" r="8.500" strokeWidth="2.500" />
						<path d="M17 17l5.500 5.500" strokeWidth="2.500" />
					</svg>
				</TaskButton>
				<TaskButton label="Task view">
					<svg className="h-6 w-6" viewBox="0 0 24 24" aria-hidden="true">
						<path d="M6 1h18v16H6z" fill="#f2f2f2" />
						<path d="M0 7h17v15H0z" fill="#777" fillOpacity="0.900" />
					</svg>
				</TaskButton>
				<TaskButton label="Copilot">
					<svg className="h-6 w-6" viewBox="0 0 24 24" aria-hidden="true">
						<path d="M8 1h7q2 0 3 5h-4q-2 0-3 3l-2 6q-1 3-3 3-5 0-5-5 0-3 3-8 1-4 4-4z" fill="url(#copilotA)" />
						<path d="M16 23H9q-2 0-3-5h4q2 0 3-3l2-6q1-3 3-3 5 0 5 5 0 3-3 8-1 4-4 4z" fill="url(#copilotB)" />
					</svg>
				</TaskButton>
				<TaskButton label="File Explorer" state="active">
					<svg className="h-6 w-6" viewBox="0 0 24 24" aria-hidden="true">
						<path d="M0 3q0-1 1-1h7l2 3h13q1 0 1 1v5H0z" fill="#e3a21c" />
						<path d="M0 6h24v16H0z" fill="url(#folder)" />
						<path d="M5 23v-6q0-2 2-2h10q2 0 2 2v6h-3v-2H8v2z" fill="#1979cc" />
					</svg>
				</TaskButton>
				<TaskButton label="Edge" state="running">
					<EdgeIcon className="h-6 w-6" />
				</TaskButton>
				<TaskButton label="Microsoft Store">
					<svg className="h-6 w-6" viewBox="0 0 24 24" aria-hidden="true">
						<path d="M7 7V2q0-1 1-1h8q1 0 1 1v5" fill="none" stroke="#3aa7d0" strokeWidth="1.500" />
						<path d="M1 5h22v16q0 3-3 3H4q-3 0-3-3z" fill="#f1f1f1" />
						<path d="M8 10h4v4H8z" fill="#e5533a" />
						<path d="M13 10h4v4h-4z" fill="#6fb13c" />
						<path d="M8 15h4v4H8z" fill="#2f9de0" />
						<path d="M13 15h4v4h-4z" fill="#f2b630" />
					</svg>
				</TaskButton>
				<TaskButton label="VLC" state="running">
					<VlcIcon className="h-6 w-6" />
				</TaskButton>
				<TaskButton label="Task Manager" state="running">
					<svg className="h-6 w-6" viewBox="0 0 24 24" aria-hidden="true">
						<path d="M0 3h24v18H0z" fill="#1769b0" />
						<path d="M0 15l3-5 3 3 4-7 3 7 3-4 3 4 3-7 2 4v11H0z" fill="#67c4f2" />
					</svg>
				</TaskButton>
				<TaskButton label="Bandicut" state="running">
					<BandicutIcon className="h-6 w-6" />
				</TaskButton>
				<TaskButton label="Bandicam" state="running">
					<BandicamIcon className="h-6 w-6" />
				</TaskButton>
			</div>
			<div className="ml-auto flex shrink-0 items-center pr-5">
				<button type="button" aria-label="Show hidden icons" className="flex w-8 justify-center">
					<ChevronUp size={15} />
				</button>
				<button type="button" aria-label="OneDrive" className="flex w-8 justify-center">
					<svg className="h-4 w-4" viewBox="0 0 16 16" aria-hidden="true">
						<path d="M4 13a4 4 0 01-1-7.500A5 5 0 0112 6a3.500 3.500 0 01.500 7z" fill="#727272" />
						<path d="M1 1.500l14 13" stroke="#1c1c1c" strokeWidth="3" />
						<path d="M1 1.500l14 13" stroke="#ddd" />
					</svg>
				</button>
				<button type="button" aria-label="Network" className="flex w-7 justify-center pl-1">
					<svg className="h-4 w-4" viewBox="0 0 16 16" fill="none" stroke="#f0f0f0" aria-hidden="true">
						<path d="M10.500 2.500H.500v10h13V7.500M4 15.500h7M5 12.500v3M9.500 12.500v3" />
						<path d="M11.500.500h4v4.500h-4zM13.500 5v3" />
					</svg>
				</button>
				<button type="button" aria-label="Volume muted" className="flex w-6 justify-center">
					<svg className="h-4 w-4" viewBox="0 0 16 16" fill="none" stroke="#f0f0f0" aria-hidden="true">
						<path d="M6 12L3.500 9.500H1.500v-4h2L8 1.500v4" />
						<circle cx="11" cy="11" r="4" fill="#f0f0f0" />
						<path d="M9.500 9.500l3 3M12.500 9.500l-3 3" stroke="#222" />
					</svg>
				</button>
				<time className="w-[68px] text-right text-[12px] leading-4">
					4:06 PM
					<br />
					1/27/2025
				</time>
				<button type="button" aria-label="Notifications" className="ml-[7px]">
					<svg className="h-4 w-4" viewBox="0 0 16 16" fill="#5fe0f2" aria-hidden="true">
						<path d="M8 1a5 5 0 015 5v4l1.500 2.500h-13L3 10V6a5 5 0 015-5zM6 13.500h4a2 2 0 01-4 0z" />
					</svg>
				</button>
			</div>
		</footer>
	);
}

export default function App() {
	return (
		<div className="relative flex h-screen w-full flex-col overflow-hidden bg-[#2b2b2b] font-['Open_Sans','Noto_Sans',sans-serif]">
			<Gradients />
			<div className="flex min-h-0 w-[78px] flex-1 flex-col">
				{desktopShortcuts.map((shortcut) => (
					<DesktopShortcut key={shortcut.name} {...shortcut} />
				))}
			</div>
			{/* tail of the watermark that sticks out from under the windows */}
			<span className="absolute top-[584px] right-[84px] text-[24px] leading-[30px] text-[#a8a8a8]">2</span>
			<TaskManager />
			<Explorer />
			<button
				type="button"
				className="absolute right-[1px] bottom-12 z-20 h-[38px] border border-[#3c7fb1] bg-[#e1e1e1] px-3 font-['Liberation_Sans',sans-serif] text-[16px] text-[#111] shadow-[inset_0_0_0_1px_#c5dcf0]"
			>
				Stop Collecting
			</button>
			<svg className="absolute top-[558px] left-[466px] z-30 h-[23px] w-[14px]" viewBox="0 0 14 23" fill="#fff" stroke="#000" aria-hidden="true">
				<path d="M1.500 1.500v17l4-3.800 2.700 6.300 2.800-1.200-2.700-6.100h5z" />
			</svg>
			<Taskbar />
		</div>
	);
}
